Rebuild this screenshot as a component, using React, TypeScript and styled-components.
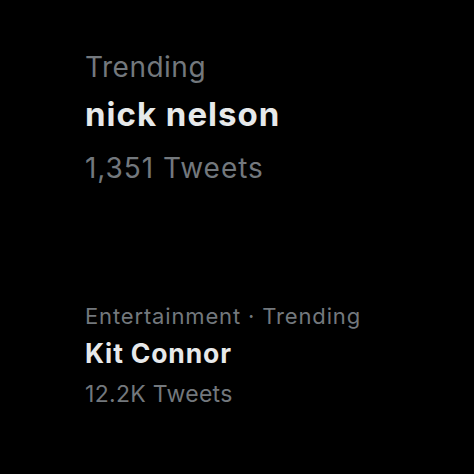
import { createGlobalStyle, styled } from "styled-components";

const GlobalStyle = createGlobalStyle`
  html, body {
    margin: 0;
    padding: 0;
    background: #000;
  }
  body {
    font-family: Inter, "Liberation Sans", sans-serif;
    -webkit-font-smoothing: antialiased;
  }
`;

const Page = styled.div`
  width: 474px;
  height: 474px;
  background: #000;
  display: flex;
  flex-direction: column;
  padding: 45px 0 0 85px;
  box-sizing: border-box;
`;

const Trend = styled.div<{ $gap: number }>`
  display: flex;
  flex-direction: column;
  margin-bottom: ${({ $gap }) => $gap}px;
`;

type LineStyle = { size: number; lh: number; ls: number };

const Meta = styled.div<{ $s: LineStyle }>`
  color: #73787d;
  white-space: nowrap;
  font-size: ${({ $s }) => $s.size}px;
  line-height: ${({ $s }) => $s.lh}px;
  letter-spacing: ${({ $s }) => $s.ls}px;
`;

const Title = styled(Meta)`
  color: #e7e9ea;
  font-weight: 700;
`;

const Count = styled(Meta)``;

type TrendItem = {
  meta: string;
  title: string;
  count: string;
  styles: [LineStyle, LineStyle, LineStyle];
  gap: number;
};

const trends: TrendItem[] = [
  {
    meta: "Trending",
    title: "nick nelson",
    count: "1,351 Tweets",
    styles: [
      { size: 28, lh: 44, ls: 0.5 },
      { size: 33, lh: 50, ls: 1 },
      { size: 28, lh: 58, ls: 0.95 },
    ],
    gap: 104,
  },
  {
    meta: "Entertainment · Trending",
    title: "Kit Connor",
    count: "12.2K Tweets",
    styles: [
      { size: 22, lh: 30, ls: 0.85 },
      { size: 26.5, lh: 45, ls: 0.85 },
      { size: 23, lh: 37, ls: 0.3 },
    ],
    gap: 0,
  },
];

export default function App() {
  return (
    <>
      <GlobalStyle />
      <Page>
        {trends.map((t) => (
          <Trend key={t.title} $gap={t.gap}>
            <Meta $s={t.styles[0]}>{t.meta}</Meta>
            <Title $s={t.styles[1]}>{t.title}</Title>
            <Count $s={t.styles[2]}>{t.count}</Count>
          </Trend>
        ))}
      </Page>
    </>
  );
}
